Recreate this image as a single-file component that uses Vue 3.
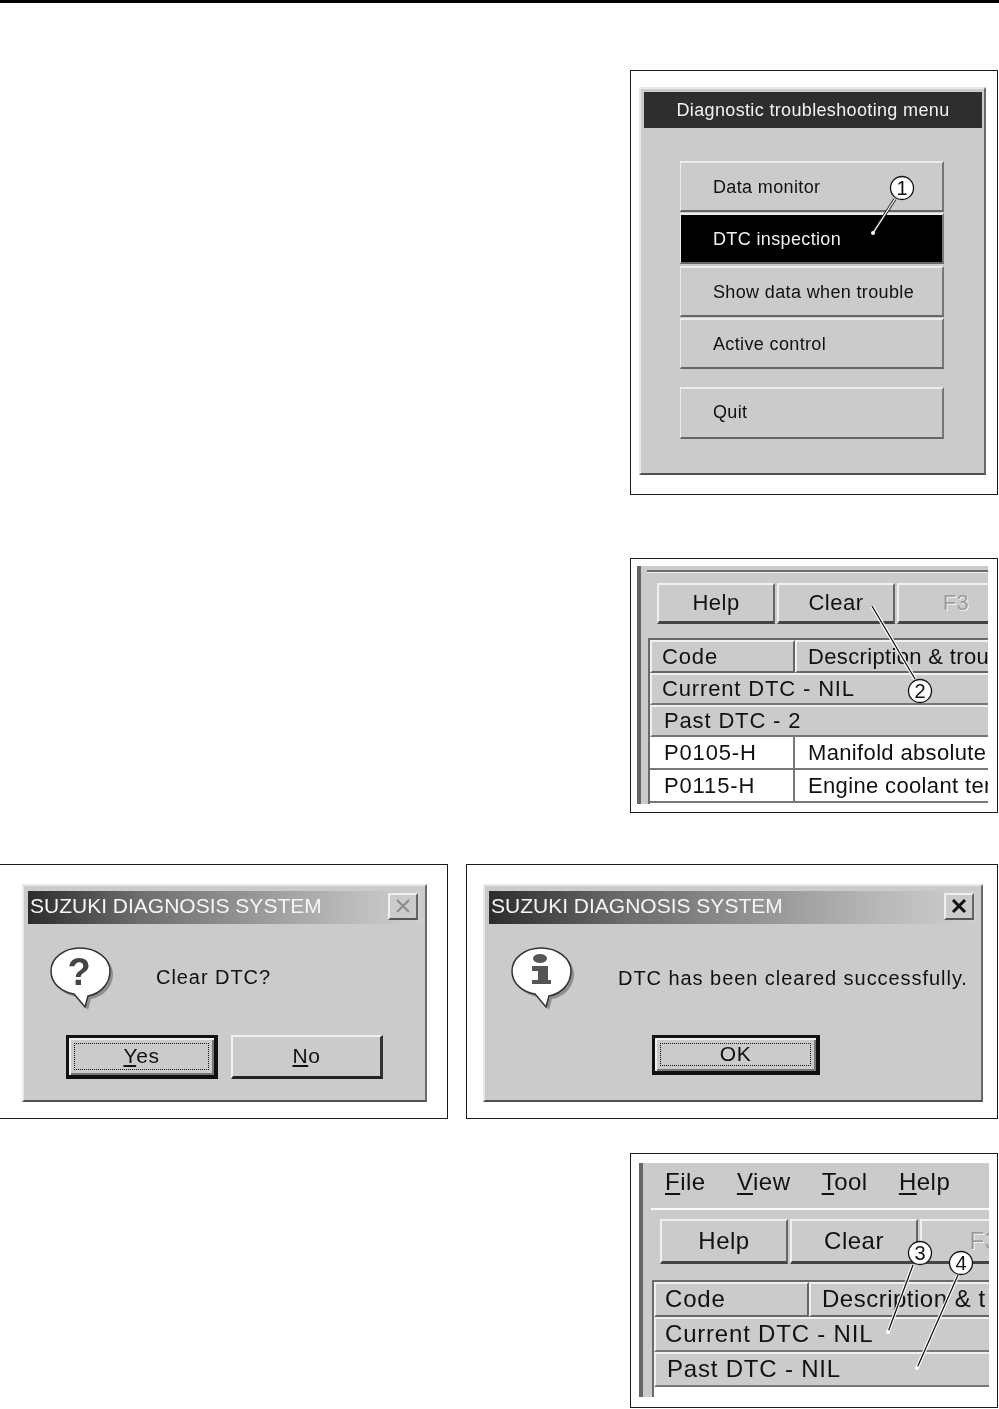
<template>
  <div class="page">
    <div class="top-bar"></div>

    <!-- Diagnostic menu -->
    <div class="row row-right row-menu">
      <section class="panel panel-menu">
        <div class="window menu-window">
          <div class="menu-title">Diagnostic troubleshooting menu</div>
          <div class="menu-list">
            <div
              v-for="item in menuItems"
              :key="item.label"
              class="menu-btn"
              :class="{ active: item.active, quit: item.quit }"
            >
              {{ item.label }}
            </div>
          </div>
        </div>
        <svg class="leaders" width="366" height="423">
          <line x1="264" y1="128" x2="242" y2="162" class="halo-dark" />
          <line x1="264" y1="128" x2="242" y2="162" class="line-light" />
          <circle cx="242" cy="162" r="2" fill="#fff" />
          <circle cx="271" cy="117" r="11.5" class="mark" />
          <text x="271" y="124" class="mark-num">1</text>
        </svg>
      </section>
    </div>

    <!-- Before clearing -->
    <div class="row row-right row-before">
      <section class="panel panel-shot">
        <div class="client client-a">
          <div class="rule"></div>
          <div class="toolbar toolbar-a">
            <div v-for="b in toolButtons" :key="b.label" class="tool-btn" :class="{ off: b.off }">{{ b.label }}</div>
          </div>
          <div class="grid grid-a">
            <div class="grid-row head">
              <div class="cell code">Code</div>
              <div class="cell desc">Description &amp; trou</div>
            </div>
            <div class="grid-row group">Current DTC - NIL</div>
            <div class="grid-row group">Past DTC - 2</div>
            <div v-for="r in pastCodes" :key="r.code" class="grid-row data">
              <div class="cell code">{{ r.code }}</div>
              <div class="cell desc">{{ r.text }}</div>
            </div>
          </div>
        </div>
        <svg class="leaders" width="366" height="254">
          <line x1="284" y1="120" x2="241" y2="47" class="halo" />
          <line x1="284" y1="120" x2="241" y2="47" class="line-dark" />
          <circle cx="289" cy="132" r="11.5" class="mark" />
          <text x="289" y="139" class="mark-num">2</text>
        </svg>
      </section>
    </div>

    <!-- Dialogs -->
    <div class="row row-dialogs">
      <section class="panel panel-dialog panel-confirm">
        <div class="window dialog">
          <div class="dialog-title">
            <span>SUZUKI DIAGNOSIS SYSTEM</span>
            <span class="close off">
              <svg width="18" height="16" viewBox="0 0 18 16"><path d="M3 2l12 12M15 2L3 14" /></svg>
            </span>
          </div>
          <div class="dialog-body">
            <svg class="bubble" width="68" height="68" viewBox="0 0 68 68">
              <path :d="bubblePath" transform="translate(3 3)" fill="#8f8f8f" />
              <path :d="bubblePath" fill="#fff" stroke="#333" stroke-width="1.5" />
              <text x="29" y="39" class="q-mark">?</text>
            </svg>
            <div class="msg msg-confirm">Clear DTC?</div>
          </div>
          <div class="dialog-actions actions-confirm">
            <div class="win-btn win-default btn-yes"><span class="focus"><span><u>Y</u>es</span></span></div>
            <div class="win-btn btn-no"><span><u>N</u>o</span></div>
          </div>
        </div>
      </section>

      <section class="panel panel-dialog panel-info">
        <div class="window dialog">
          <div class="dialog-title">
            <span>SUZUKI DIAGNOSIS SYSTEM</span>
            <span class="close">
              <svg width="18" height="16" viewBox="0 0 18 16"><path d="M3 2l12 12M15 2L3 14" /></svg>
            </span>
          </div>
          <div class="dialog-body">
            <svg class="bubble" width="68" height="68" viewBox="0 0 68 68">
              <path :d="bubblePath" transform="translate(3 3)" fill="#8f8f8f" />
              <path :d="bubblePath" fill="#fff" stroke="#333" stroke-width="1.5" />
              <ellipse cx="29" cy="12.5" rx="7" ry="4.5" fill="#555" />
              <path d="M21 20h16v14h3v4H21v-4h6V25h-6z" fill="#555" />
            </svg>
            <div class="msg msg-info">DTC has been cleared successfully.</div>
          </div>
          <div class="dialog-actions actions-info">
            <div class="win-btn win-default btn-ok"><span class="focus"><span>OK</span></span></div>
          </div>
        </div>
      </section>
    </div>

    <!-- After clearing -->
    <div class="row row-right row-after">
      <section class="panel panel-shot">
        <div class="client client-b">
          <div class="menubar">
            <span v-for="m in menuBar" :key="m.rest" class="menubar-item"><u>{{ m.key }}</u>{{ m.rest }}</span>
          </div>
          <div class="rule rule-b"></div>
          <div class="toolbar toolbar-b">
            <div v-for="b in toolButtons" :key="b.label" class="tool-btn" :class="{ off: b.off }">{{ b.label }}</div>
          </div>
          <div class="grid grid-b">
            <div class="grid-row head">
              <div class="cell code">Code</div>
              <div class="cell desc">Description &amp; t</div>
            </div>
            <div class="grid-row group">Current DTC - NIL</div>
            <div class="grid-row group">Past DTC - NIL</div>
          </div>
        </div>
        <svg class="leaders" width="366" height="253">
          <line x1="282" y1="111" x2="257" y2="178" class="halo" />
          <line x1="282" y1="111" x2="257" y2="178" class="line-dark" />
          <circle cx="257" cy="178" r="2" fill="#fff" />
          <line x1="327" y1="121" x2="286" y2="214" class="halo" />
          <line x1="327" y1="121" x2="286" y2="214" class="line-dark" />
          <circle cx="286" cy="214" r="2" fill="#fff" />
          <circle cx="289" cy="99" r="11.5" class="mark" />
          <text x="289" y="106" class="mark-num">3</text>
          <circle cx="330" cy="109" r="11.5" class="mark" />
          <text x="330" y="116" class="mark-num">4</text>
        </svg>
      </section>
    </div>
  </div>
</template>

<script setup>
const menuItems = [
  { label: 'Data monitor' },
  { label: 'DTC inspection', active: true },
  { label: 'Show data when trouble' },
  { label: 'Active control' },
  { label: 'Quit', quit: true }
]

const toolButtons = [
  { label: 'Help' },
  { label: 'Clear' },
  { label: 'F3', off: true }
]

const pastCodes = [
  { code: 'P0105-H', text: 'Manifold absolute' },
  { code: 'P0115-H', text: 'Engine coolant ter' }
]

const menuBar = [
  { key: 'F', rest: 'ile' },
  { key: 'V', rest: 'iew' },
  { key: 'T', rest: 'ool' },
  { key: 'H', rest: 'elp' }
]

// speech bubble shared by both dialog icons
const bubblePath = 'M1 25C1 12 14 2 30 2s30 10 30 23c0 13-10 23-22 25l-3 11-11-13C12 46 1 38 1 25z'
</script>

<style>
html,
body {
  background: #fff;
}
</style>

<style scoped>
.page {
  width: 999px;
  height: 1409px;
  overflow: hidden;
  font-family: "Liberation Sans", Arial, sans-serif;
  color: #111;
  box-sizing: border-box;
}

.top-bar {
  height: 3px;
  background: #000;
}

.row {
  display: flex;
}

.row-right {
  justify-content: flex-end;
  padding-right: 1px;
}

.row-menu {
  margin-top: 67px;
}

.row-before {
  margin-top: 63px;
}

.row-dialogs {
  margin-top: 51px;
  gap: 18px;
  padding-right: 1px;
}

.row-after {
  margin-top: 34px;
}

.panel {
  position: relative;
  border: 1px solid #1a1a1a;
  box-sizing: border-box;
  background: #fff;
  width: 368px;
}

.panel-menu {
  height: 425px;
  padding: 16px 11px 19px 8px;
}

.panel-shot {
  height: 255px;
}

.panel-dialog {
  height: 255px;
  padding: 19px 0 16px 0;
}

.panel-confirm {
  width: 448px;
  border-left: none;
  padding-left: 22px;
  padding-right: 20px;
}

.panel-info {
  width: 532px;
  padding-left: 16px;
  padding-right: 14px;
}

.leaders {
  position: absolute;
  left: 0;
  top: 0;
  pointer-events: none;
  filter: blur(0.3px);
}

.halo {
  stroke: #fff;
  stroke-width: 3.5;
}

.halo-dark {
  stroke: #222;
  stroke-width: 3.2;
}

.line-dark {
  stroke: #111;
  stroke-width: 1.3;
}

.line-light {
  stroke: #fff;
  stroke-width: 1.3;
}

.mark {
  fill: #fff;
  stroke: #111;
  stroke-width: 1.3;
}

.mark-num {
  font-size: 20px;
  text-anchor: middle;
  fill: #111;
}

.window {
  background: #cbcbcb;
  border-top: 2px solid #e9e9e9;
  border-left: 2px solid #e9e9e9;
  border-right: 2px solid #6a6a6a;
  border-bottom: 2px solid #505050;
  box-sizing: border-box;
  height: 100%;
  filter: blur(0.45px);
}

.menu-window {
  padding: 3px 2px 0 3px;
}

.menu-title {
  height: 36px;
  line-height: 36px;
  background: #2e2e2e;
  color: #f2f2f2;
  text-align: center;
  font-size: 18px;
  letter-spacing: 0.35px;
}

.menu-list {
  display: flex;
  flex-direction: column;
  gap: 1.4px;
  margin: 33px 38px 0 36px;
}

.menu-btn {
  height: 51px;
  line-height: 49px;
  padding-left: 32px;
  font-size: 18px;
  letter-spacing: 0.36px;
  background: #cbcbcb;
  border-top: 2px solid #ececec;
  border-left: 1px solid #ececec;
  border-right: 2px solid #777;
  border-bottom: 2px solid #666;
  box-sizing: border-box;
}

.menu-btn.active {
  background: #000;
  color: #f0f0f0;
}

.menu-btn.quit {
  margin-top: 16px;
  height: 52px;
  line-height: 47px;
}

.client {
  height: 100%;
  box-sizing: border-box;
  background: #cbcbcb;
  overflow: hidden;
  border-left: 4px solid #666;
  filter: blur(0.45px);
}

.client-a {
  margin: 0 9px 0 6px;
  height: 238px;
  position: relative;
  top: 7px;
  width: 351px;
  padding-left: 4px;
}

.client-b {
  margin: 0 8px 0 8px;
  height: 234px;
  position: relative;
  top: 9px;
  width: 350px;
  padding-left: 4px;
  background: #cbcbcb;
}

.rule {
  height: 2px;
  margin-top: 4px;
  background: #6b6b6b;
  border-bottom: 1px solid #f2f2f2;
  margin-left: 2px;
}

.rule-b {
  background: #fafafa;
  height: 2px;
  border-bottom: none;
  margin-top: 0;
  margin-left: 4px;
}

.menubar {
  display: flex;
  height: 45px;
  box-sizing: border-box;
  padding: 0 0 8px 18px;
  align-items: center;
  font-size: 24px;
  letter-spacing: 0.5px;
  gap: 31.2px;
}

.menubar u {
  text-underline-offset: 3px;
}

.toolbar {
  display: flex;
  gap: 2px;
}

.toolbar-a {
  margin: 10px 0 0 12px;
}

.toolbar-b {
  margin: 9px 0 0 13px;
}

.tool-btn {
  flex: 0 0 118px;
  height: 41px;
  line-height: 36px;
  text-align: center;
  font-size: 22px;
  letter-spacing: 0.5px;
  background: #cbcbcb;
  border-top: 2px solid #f0f0f0;
  border-left: 2px solid #f0f0f0;
  border-right: 2px solid #666;
  border-bottom: 3px solid #444;
  box-sizing: border-box;
}

.toolbar-b .tool-btn {
  flex-basis: 128px;
  height: 45px;
  line-height: 40px;
  font-size: 24px;
}

.tool-btn.off {
  color: #9c9c9c;
  text-shadow: 1px 1px 0 #f4f4f4;
}

.grid {
  background: #fff;
  border-top: 2px solid #6a6a6a;
  border-left: 2px solid #6a6a6a;
  display: flex;
  flex-direction: column;
  font-size: 22px;
  letter-spacing: 0.85px;
  width: 420px;
}

.grid-a {
  margin: 14px 0 0 3px;
  height: 170px;
}

.grid-b {
  margin: 16px 0 0 5px;
  height: 120px;
  font-size: 24px;
  letter-spacing: 0.8px;
}

.grid-row {
  display: flex;
  box-sizing: border-box;
  white-space: nowrap;
}

.head {
  height: 33px;
  line-height: 29px;
}

.grid-b .head {
  height: 35px;
  line-height: 30px;
}

.head .cell {
  background: #cbcbcb;
  border-top: 2px solid #f0f0f0;
  border-left: 2px solid #f0f0f0;
  border-right: 2px solid #666;
  border-bottom: 2px solid #666;
}

.cell {
  box-sizing: border-box;
  padding-left: 10px;
  flex: 1;
}

.cell.desc {
  padding-left: 11px;
  letter-spacing: 0.35px;
}

.grid-b .cell.desc {
  letter-spacing: 0.5px;
}

.cell.code {
  flex: 0 0 145px;
}

.grid-b .cell.code {
  flex-basis: 155px;
  padding-left: 9px;
}

.group {
  height: 32px;
  line-height: 27px;
  padding-left: 10px;
  background: #cbcbcb;
  border-top: 2px solid #f0f0f0;
  border-left: 2px solid #f0f0f0;
  border-bottom: 2px solid #777;
}

.group + .group {
  padding-left: 12px;
}

.grid-b .group {
  height: 35px;
  line-height: 30px;
  padding-left: 9px;
}

.grid-b .group + .group {
  padding-left: 11px;
}

.data {
  height: 33px;
  line-height: 32px;
  border-bottom: 2px solid #777;
  background: #fff;
}

.data .cell.code {
  padding-left: 14px;
  border-right: 2px solid #777;
}

.data .cell.desc {
  padding-left: 13px;
}

.dialog {
  padding: 5px 4px 0 4px;
}

.dialog-title {
  height: 33px;
  box-sizing: border-box;
  padding: 0 0 3px 2px;
  display: flex;
  align-items: center;
  justify-content: space-between;
  color: #f5f5f5;
  font-size: 21px;
  background: linear-gradient(90deg, #2c2c2c 0%, #6c6c6c 28%, #b8b8b8 80%, #cfcfcf 100%);
}

.close {
  margin-right: 3px;
  width: 30px;
  height: 27px;
  display: flex;
  align-items: center;
  justify-content: center;
  background: #cbcbcb;
  border-top: 2px solid #f0f0f0;
  border-left: 2px solid #f0f0f0;
  border-right: 2px solid #666;
  border-bottom: 2px solid #555;
  box-sizing: border-box;
}

.close path {
  fill: none;
  stroke: #111;
  stroke-width: 3;
}

.close.off path {
  stroke: #8c8c8c;
  stroke-width: 2;
}

.dialog-body {
  position: relative;
  display: flex;
  height: 111px;
  box-sizing: border-box;
  padding: 22px 0 0 22px;
}

.msg {
  font-size: 20px;
  letter-spacing: 0.95px;
  white-space: nowrap;
}

.msg-confirm {
  margin-left: 38px;
  padding-top: 20px;
}

.msg-info {
  margin-left: 39px;
  padding-top: 21px;
}

.q-mark {
  font-family: "Liberation Sans", sans-serif;
  font-weight: 700;
  font-size: 38px;
  text-anchor: middle;
  fill: #444;
}

.dialog-actions {
  display: flex;
}

.actions-confirm {
  gap: 13px;
  padding-left: 38px;
}

.actions-info {
  padding-left: 163px;
}

.win-btn {
  display: flex;
  align-items: center;
  justify-content: center;
  height: 44px;
  width: 152px;
  font-size: 21px;
  letter-spacing: 0.6px;
  background: #cbcbcb;
  border-top: 2px solid #f0f0f0;
  border-left: 2px solid #f0f0f0;
  border-right: 3px solid #333;
  border-bottom: 3px solid #222;
  box-sizing: border-box;
}

.btn-no {
  padding-bottom: 2px;
}

.win-default {
  border: 3px solid #111;
  border-right-width: 4px;
  border-bottom-width: 4px;
  box-shadow: inset 2px 2px 0 #f0f0f0, inset -2px -2px 0 #777;
  padding: 5px;
}

.btn-ok {
  width: 168px;
  height: 40px;
}

.focus {
  flex: 1;
  height: 100%;
  display: flex;
  align-items: center;
  justify-content: center;
  padding-bottom: 2px;
  border: 1.5px dotted #111;
  box-sizing: border-box;
}

u {
  text-underline-offset: 2px;
}
</style>
